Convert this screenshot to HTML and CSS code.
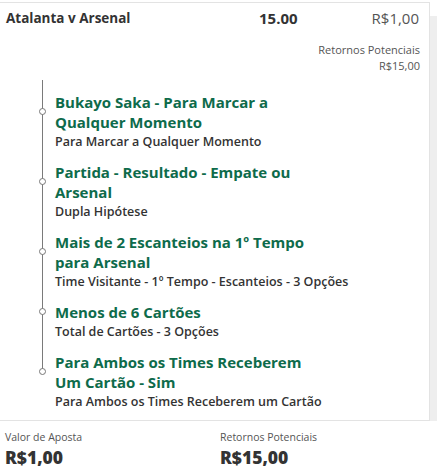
FILE: index.html
```html
<!DOCTYPE html>
<html lang="pt">
<head>
<meta charset="utf-8">
<link rel="stylesheet" href="styles.css">
</head>
<body>
<div class="frame">
  <div class="card">
    <div class="head">
      <span class="event">Atalanta v Arsenal</span>
      <span class="odds">15.00</span>
      <span class="stake">R$1,00</span>
    </div>
    <div class="returns">
      <div>Retornos Potenciais</div>
      <div>R$15,00</div>
    </div>
    <div class="legs">
      <div class="leg">
        <div class="title">Bukayo Saka - Para Marcar a Qualquer Momento</div>
        <div class="sub">Para Marcar a Qualquer Momento</div>
      </div>
      <div class="leg">
        <div class="title">Partida - Resultado - Empate ou Arsenal</div>
        <div class="sub">Dupla Hipótese</div>
      </div>
      <div class="leg">
        <div class="title">Mais de 2 Escanteios na 1º Tempo para Arsenal</div>
        <div class="sub">Time Visitante - 1º Tempo - Escanteios - 3 Opções</div>
      </div>
      <div class="leg">
        <div class="title">Menos de 6 Cartões</div>
        <div class="sub">Total de Cartões - 3 Opções</div>
      </div>
      <div class="leg">
        <div class="title">Para Ambos os Times Receberem Um Cartão - Sim</div>
        <div class="sub">Para Ambos os Times Receberem um Cartão</div>
      </div>
    </div>
  </div>
  <div class="track"></div>
</div>
<div class="footer">
  <div class="col">
    <div class="label">Valor de Aposta</div>
    <div class="amount">R$1,00</div>
  </div>
  <div class="col">
    <div class="label">Retornos Potenciais</div>
    <div class="amount">R$15,00</div>
  </div>
</div>
</body>
</html>
```
FILE: styles.css
```css
html, body {
  margin: 0;
  padding: 0;
  background: #ffffff;
}
body {
  font-family: "Open Sans", "Noto Sans", sans-serif;
  color: #333333;
  width: 437px;
}
.frame {
  display: flex;
  margin-top: 2px;
}
.card {
  width: 430px;
  border-top: 1px solid #e3e3e3;
  border-right: 1px solid #e3e3e3;
  border-bottom: 1px solid #e3e3e3;
  box-sizing: border-box;
}
.track {
  flex: 1;
  background: #eeeeee;
  margin-top: 14px;
}
.head {
  display: flex;
  align-items: center;
  padding: 5px 10px 0 6px;
  height: 20px;
  line-height: 20px;
}
.event {
  font-weight: 700;
  font-size: 13.5px;
  width: 253px;
}
.odds {
  font-weight: 700;
  font-size: 15px;
}
.stake {
  flex: 1;
  text-align: right;
  font-size: 15px;
  color: #555555;
}
.returns {
  margin-top: 14px;
  padding-right: 9px;
  text-align: right;
  font-size: 11px;
  line-height: 16px;
  color: #555555;
}
.legs {
  position: relative;
  margin-top: 6px;
  padding: 12px 10px 8px 55px;
}
.legs::before {
  content: "";
  position: absolute;
  left: 42px;
  top: 0;
  bottom: 47px;
  width: 1px;
  background: #7a7a7a;
}
.leg {
  margin-bottom: 10px;
}
.leg:last-child {
  margin-bottom: 0;
}
.title {
  position: relative;
  color: #0e6b4b;
  font-weight: 700;
  font-size: 15px;
  line-height: 20px;
  width: 275px;
}
.title::before {
  content: "";
  position: absolute;
  left: -16px;
  top: 50%;
  width: 7px;
  height: 7px;
  margin-top: -4px;
  border: 1px solid #777777;
  border-radius: 50%;
  background: #ffffff;
  box-sizing: border-box;
}
.sub {
  font-weight: 600;
  font-size: 12.5px;
  line-height: 20px;
  color: #333333;
  white-space: nowrap;
}
.footer {
  display: flex;
  padding: 8px 0 0 5px;
}
.col {
  width: 215px;
}
.label {
  font-size: 10.5px;
  line-height: 16px;
  color: #555555;
}
.amount {
  font-size: 17.5px;
  font-weight: 800;
  line-height: 24px;
  color: #333333;
}
```
